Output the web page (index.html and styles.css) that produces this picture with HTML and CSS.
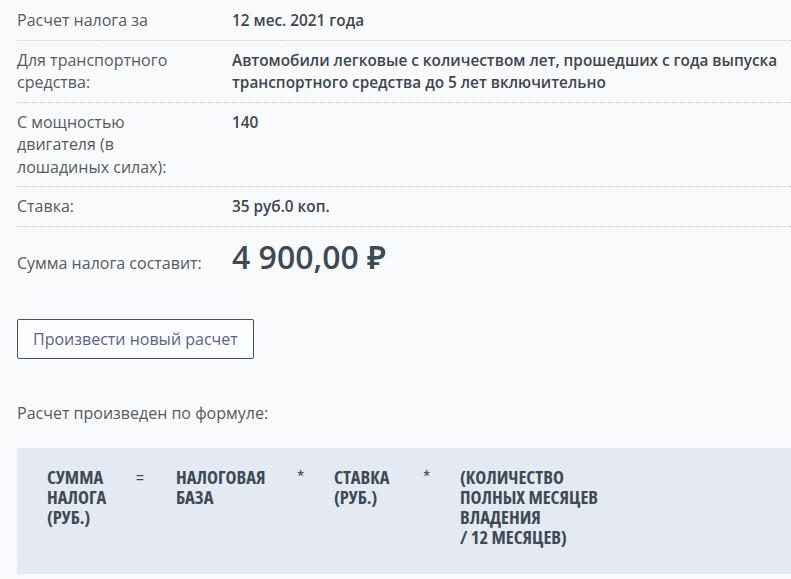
FILE: index.html
```html
<!DOCTYPE html>
<html lang="ru">
<head>
<meta charset="utf-8">
<title>Расчет налога</title>
<link rel="stylesheet" href="styles.css">
</head>
<body>
<div class="page">
  <div class="rows">
    <div class="row first">
      <div class="label">Расчет налога за</div>
      <div class="value">12 мес. 2021 года</div>
    </div>
    <div class="row">
      <div class="label">Для транспортного средства:</div>
      <div class="value">Автомобили легковые с количеством лет, прошедших с года выпуска транспортного средства до 5 лет включительно</div>
    </div>
    <div class="row">
      <div class="label">С мощностью двигателя (в лошадиных силах):</div>
      <div class="value">140</div>
    </div>
    <div class="row">
      <div class="label">Ставка:</div>
      <div class="value">35 руб.0 коп.</div>
    </div>
    <div class="row total">
      <div class="label">Сумма налога составит:</div>
      <div class="amount">4 900,00 ₽</div>
    </div>
  </div>
  <button class="btn" type="button">Произвести новый расчет</button>
  <p class="note">Расчет произведен по формуле:</p>
  <div class="formula">
    <div class="f-term">СУММА<br>НАЛОГА<br>(РУБ.)</div>
    <div class="f-op">=</div>
    <div class="f-term">НАЛОГОВАЯ<br>БАЗА</div>
    <div class="f-op">*</div>
    <div class="f-term">СТАВКА<br>(РУБ.)</div>
    <div class="f-op">*</div>
    <div class="f-term">(КОЛИЧЕСТВО<br>ПОЛНЫХ МЕСЯЦЕВ<br>ВЛАДЕНИЯ<br>/ 12 МЕСЯЦЕВ)</div>
  </div>
</div>
</body>
</html>
```
FILE: styles.css
```css
html, body {
  margin: 0;
  padding: 0;
  background: #f9fafb;
}
body {
  font-family: "Open Sans", "Noto Sans", sans-serif;
  color: #555b61;
}
.page {
  padding-left: 17px;
  width: 820px;
}
.row {
  display: grid;
  grid-template-columns: 215px 1fr;
  padding: 8px 0 8px;
  border-bottom: 1px dotted #c9ccd0;
  font-size: 16px;
  line-height: 22.5px;
}
.row.first {
  padding-top: 9px;
}
.label {
  padding-right: 28px;
}
.value {
  font-size: 15.35px;
  font-weight: 600;
  color: #3d4650;
}
.row.total {
  border-bottom: none;
  align-items: baseline;
  padding: 8px 0 0;
}
.amount {
  font-size: 32px;
  font-weight: 600;
  color: #3d4a56;
  line-height: 44px;
}
.btn {
  display: block;
  margin-top: 40px;
  height: 40px;
  padding: 0 15px;
  border: 1px solid #3f5263;
  border-radius: 2px;
  background: #fbfcfd;
  font-family: "Open Sans", "Noto Sans", sans-serif;
  font-size: 16px;
  color: #5a6383;
}
.note {
  margin: 43px 0 0;
  font-size: 16px;
  line-height: 22px;
}
.formula {
  margin-top: 24px;
  background: #e5eaf2;
  padding: 19px 30px 27px;
  display: grid;
  grid-template-columns: 89px 40px 121px 37px 89px 37px auto;
  justify-content: start;
  font-family: "Open Sans", sans-serif;
  font-stretch: 75%;
  font-weight: 700;
  font-size: 18.5px;
  line-height: 20px;
  color: #3e4a57;
  height: 80px;
}
.f-op {
  font-weight: 400;
}
```
